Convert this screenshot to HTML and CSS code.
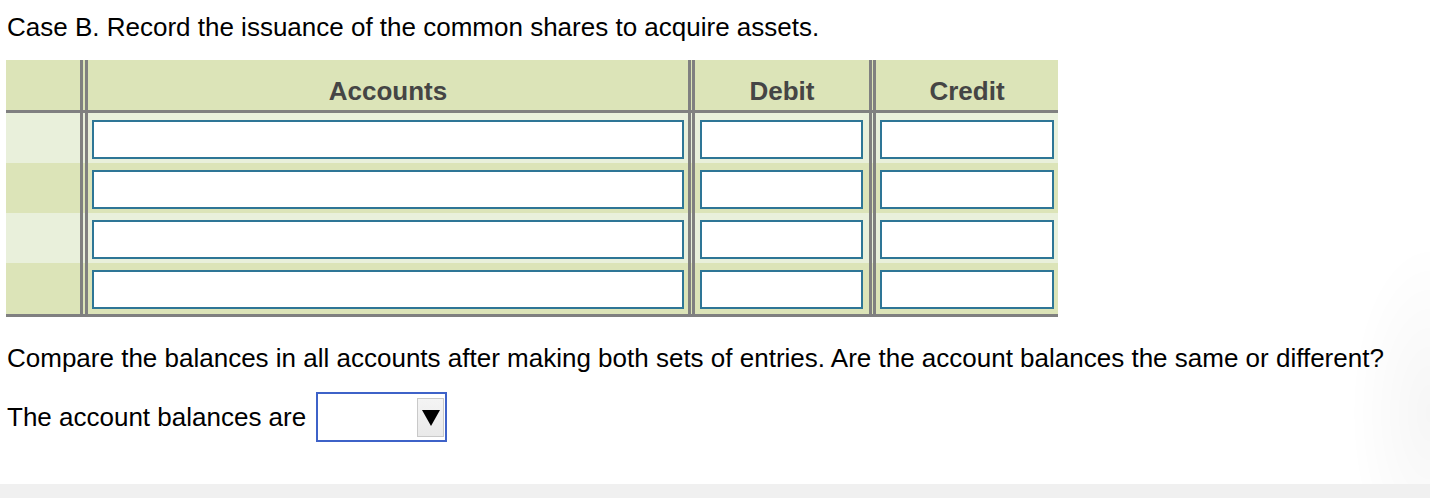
FILE: index.html
```html
<!DOCTYPE html>
<html lang="en">
<head>
<meta charset="utf-8">
<title>Case B</title>
<link rel="stylesheet" href="styles.css">
</head>
<body>
<div class="page">
  <p class="title">Case B. Record the issuance of the common shares to acquire assets.</p>

  <div class="journal">
    <div class="row head">
      <div class="c0"></div>
      <div class="c1">Accounts</div>
      <div class="c2">Debit</div>
      <div class="c3">Credit</div>
    </div>
    <div class="row light">
      <div class="c0"></div>
      <div class="c1"><input class="box acc" type="text"></div>
      <div class="c2"><input class="box deb" type="text"></div>
      <div class="c3"><input class="box cre" type="text"></div>
    </div>
    <div class="row dark">
      <div class="c0"></div>
      <div class="c1"><input class="box acc" type="text"></div>
      <div class="c2"><input class="box deb" type="text"></div>
      <div class="c3"><input class="box cre" type="text"></div>
    </div>
    <div class="row light">
      <div class="c0"></div>
      <div class="c1"><input class="box acc" type="text"></div>
      <div class="c2"><input class="box deb" type="text"></div>
      <div class="c3"><input class="box cre" type="text"></div>
    </div>
    <div class="row dark last">
      <div class="c0"></div>
      <div class="c1"><input class="box acc" type="text"></div>
      <div class="c2"><input class="box deb" type="text"></div>
      <div class="c3"><input class="box cre" type="text"></div>
    </div>
  </div>

  <p class="question">Compare the balances in all accounts after making both sets of entries. Are the account balances the same or different?</p>

  <div class="answer">
    <span class="label">The account balances are</span>
    <div class="select">
      <span class="arrow"><span class="tri"></span></span>
    </div>
  </div>
</div>
<div class="footer"></div>
<div class="edge"></div>
</body>
</html>
```

FILE: styles.css
```css
html, body {
  margin: 0;
  padding: 0;
  background: #ffffff;
}

body {
  font-family: "Liberation Sans", Arial, Helvetica, sans-serif;
  color: #000;
  width: 1430px;
  overflow: hidden;
}

.page {
  padding: 0 6px;
  height: 484px;
}

.title {
  margin: 0;
  padding-top: 12px;
  font-size: 26px;
  line-height: 30px;
  padding-left: 1px;
}

.journal {
  margin-top: 18px;
  width: 1052px;
}

.row {
  display: flex;
  height: 50px;
}

.head {
  background: #dce4b8;
  border-bottom: 3px solid #808080;
}

.light {
  background: #e9f0db;
}

.dark {
  background: #dce4b8;
}

.last {
  height: 51px;
  border-bottom: 3px solid #808080;
}

.c0,
.c1,
.c2,
.c3 {
  box-sizing: border-box;
  flex: none;
}

.c0 {
  width: 77px;
  border-right: 3px solid #808080;
}

.c1 {
  width: 606px;
  margin-left: 2px;
  border-left: 3px solid #808080;
  border-right: 3px solid #808080;
}

.c2 {
  width: 180px;
  margin-left: 1px;
  border-left: 3px solid #808080;
  border-right: 3px solid #808080;
}

.c3 {
  width: 185px;
  margin-left: 1px;
  border-left: 3px solid #808080;
}

.head .c1,
.head .c2,
.head .c3 {
  display: flex;
  align-items: center;
  justify-content: center;
  font-weight: bold;
  font-size: 26px;
  color: #454545;
  padding-top: 12px;
}

.light .c1, .light .c2, .light .c3,
.dark .c1, .dark .c2, .dark .c3 {
  padding-top: 7px;
}

.box {
  display: block;
  box-sizing: border-box;
  height: 39px;
  margin: 0;
  padding: 0 6px;
  border: 2px solid #2e7696;
  border-radius: 0;
  background: #ffffff;
  font-family: "Liberation Sans", Arial, sans-serif;
  font-size: 22px;
  outline: none;
}

.acc {
  width: 592px;
  margin-left: 4px;
}

.deb {
  width: 163px;
  margin-left: 5px;
}

.cre {
  width: 174px;
  margin-left: 4px;
}

.question {
  margin: 26px 0 0 0;
  font-size: 26px;
  line-height: 30px;
  padding-left: 1px;
}

.answer {
  display: flex;
  align-items: center;
  gap: 10px;
  margin-top: 19px;
  padding-left: 1px;
}

.label {
  font-size: 26px;
  line-height: 30px;
}

.select {
  box-sizing: border-box;
  width: 131px;
  height: 50px;
  border: 2px solid #3e62c8;
  background: #ffffff;
  display: flex;
  justify-content: flex-end;
  align-items: flex-start;
  padding: 4px 1px 0 0;
}

.arrow {
  box-sizing: border-box;
  width: 27px;
  height: 39px;
  background: linear-gradient(#f4f4f4, #e9e9e9);
  border: 1px solid #c9c9c9;
  display: flex;
  align-items: center;
  justify-content: center;
}

.tri {
  width: 0;
  height: 0;
  border-left: 9px solid transparent;
  border-right: 9px solid transparent;
  border-top: 16px solid #000;
}

.footer {
  height: 14px;
  background: #f0f0f0;
}

.edge {
  position: fixed;
  right: 0;
  top: 200px;
  width: 80px;
  height: 284px;
  background: radial-gradient(ellipse 100% 60% at 100% 75%, rgba(0,0,0,0.035), rgba(0,0,0,0) 100%);
  pointer-events: none;
}
```
